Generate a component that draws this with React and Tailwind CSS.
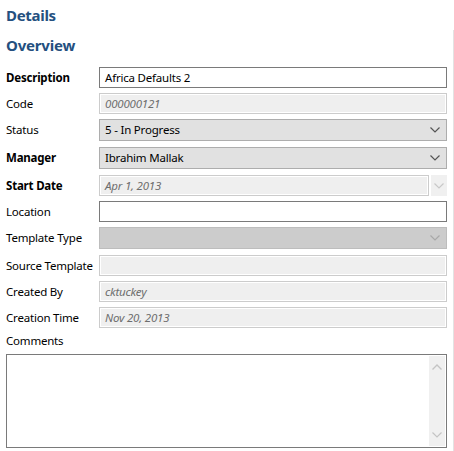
import React from 'react';

const font = { fontFamily: '"Noto Sans", "Open Sans", Arial, sans-serif' };

const Chevron = ({ className = 'text-[#555]' }) => (
  <svg width="10" height="6" viewBox="0 0 10 6" className={className}>
    <path d="M0.5 0.5 L5 5 L9.5 0.5" fill="none" stroke="currentColor" strokeWidth="1.2" />
  </svg>
);

const ChevronUp = ({ className = 'text-[#c4c4c4]' }) => (
  <svg width="10" height="6" viewBox="0 0 10 6" className={className}>
    <path d="M0.5 5.5 L5 1 L9.5 5.5" fill="none" stroke="currentColor" strokeWidth="1.4" />
  </svg>
);

const Label = ({ children, bold }) => (
  <div className={`w-[93px] shrink-0 text-[11.5px] tracking-[-0.2px] text-black whitespace-nowrap ${bold ? 'font-bold' : ''}`}>
    {children}
  </div>
);

const TextInput = ({ value }) => (
  <div className="flex-1 h-full border border-[#7a7a7a] bg-white px-[5px] flex items-center text-[11.5px] tracking-[-0.2px] text-black">
    {value}
  </div>
);

const ReadOnly = ({ value }) => (
  <div className="flex-1 h-full border border-[#cccccc] bg-[#efefef] shadow-[inset_0_0_0_1px_#ffffff] px-[5px] flex items-center text-[11.5px] tracking-[-0.2px] italic text-[#6d6d6d]">
    {value}
  </div>
);

const Select = ({ value, disabled }) => (
  <div
    className={`flex-1 h-full border px-[5px] flex items-center justify-between text-[11.5px] tracking-[-0.2px] text-black ${
      disabled ? 'bg-[#cccccc] border-[#bdbdbd]' : 'bg-[#e1e1e1] border-[#adadad]'
    }`}
  >
    <span>{value}</span>
    <span className="pr-[1px]">
      <Chevron className={disabled ? 'text-[#a8a8a8]' : 'text-[#555]'} />
    </span>
  </div>
);

const DateField = ({ value }) => (
  <div className="flex-1 h-full flex gap-[2px]">
    <div className="flex-1 h-full border border-[#cccccc] bg-[#efefef] shadow-[inset_0_0_0_1px_#ffffff] px-[5px] flex items-center text-[11.5px] tracking-[-0.2px] italic text-[#6d6d6d]">
      {value}
    </div>
    <div className="w-[16px] h-full bg-[#f0f0f0] flex items-center justify-center">
      <Chevron className="text-[#c8c8c8]" />
    </div>
  </div>
);

const Row = ({ label, bold, h, mt, children }) => (
  <div className={`flex items-center ${h} ${mt}`}>
    <Label bold={bold}>{label}</Label>
    {children}
  </div>
);

export default function App() {
  return (
    <div className="w-[454px] h-[451px] bg-white flex overflow-hidden" style={font}>
      <div className="w-[453px] pl-[6px] pr-[6px]">
        <h1 className="mt-[5px] text-[15px] leading-[20px] font-bold tracking-[-0.3px] text-[#24507f]">Details</h1>
        <h2 className="mt-[10px] text-[15px] leading-[20px] font-bold tracking-[-0.2px] text-[#24507f]">Overview</h2>

        <div className="flex flex-col mt-[12px]">
          <Row label="Description" bold h="h-[21px]" mt="mt-0">
            <TextInput value="Africa Defaults 2" />
          </Row>
          <Row label="Code" h="h-[21px]" mt="mt-[5px]">
            <ReadOnly value="000000121" />
          </Row>
          <Row label="Status" h="h-[22px]" mt="mt-[5px]">
            <Select value="5 - In Progress" />
          </Row>
          <Row label="Manager" bold h="h-[22px]" mt="mt-[6px]">
            <Select value="Ibrahim Mallak" />
          </Row>
          <Row label="Start Date" bold h="h-[21px]" mt="mt-[6px]">
            <DateField value="Apr 1, 2013" />
          </Row>
          <Row label="Location" h="h-[21px]" mt="mt-[5px]">
            <TextInput value="" />
          </Row>
          <Row label="Template Type" h="h-[22px]" mt="mt-[5px]">
            <Select value="" disabled />
          </Row>
          <Row label="Source Template" h="h-[21px]" mt="mt-[6px]">
            <ReadOnly value="" />
          </Row>
          <Row label="Created By" h="h-[21px]" mt="mt-[5px]">
            <ReadOnly value="cktuckey" />
          </Row>
          <Row label="Creation Time" h="h-[21px]" mt="mt-[5px]">
            <ReadOnly value="Nov 20, 2013" />
          </Row>
          <div className="mt-[4px] h-[18px] flex items-center text-[11.5px] tracking-[-0.2px] text-black">Comments</div>
          <div className="mt-[4px] h-[94px] border border-[#7a7a7a] bg-white flex justify-end p-[1px]">
            <div className="w-[16px] h-full bg-[#f0f0f0] flex flex-col items-center justify-between py-[8px]">
              <ChevronUp />
              <Chevron className="text-[#c4c4c4]" />
            </div>
          </div>
        </div>
      </div>
      <div className="w-[1px] mt-[30px] bg-[#e3e3e3]" />
    </div>
  );
}
